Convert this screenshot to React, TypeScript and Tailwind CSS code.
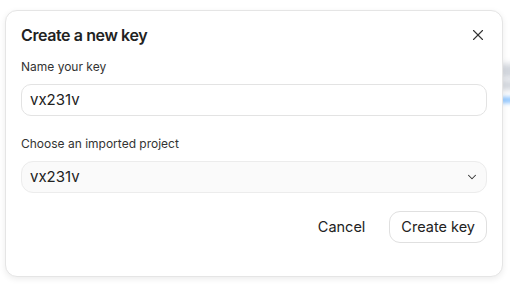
import React from 'react';
import { X, ChevronDown } from 'lucide-react';

const App: React.FC = () => {
  return (
    <div className="relative w-[510px] h-[290px] bg-white overflow-hidden font-['Inter',sans-serif] text-[#1a1a1a]">
      {/* blurred page content peeking behind the dialog */}
      <div className="absolute left-[500px] top-[64px] w-[20px] h-[14px] bg-gray-300 blur-[3px]" />
      <div className="absolute left-[500px] top-[80px] w-[20px] h-[10px] bg-gray-300 blur-[3px]" />
      <div className="absolute left-[500px] top-[97px] w-[20px] h-[6px] bg-blue-300 blur-[2px]" />

      <div className="relative ml-[5px] mt-[10px] w-[498px] h-[267px] bg-white rounded-[12px] border border-[#e5e5e5] shadow-[0_2px_6px_rgba(0,0,0,0.08)] px-[15px] pt-[12px]">
        <div className="flex items-center justify-between h-[24px]">
          <h2 className="text-[16px] font-semibold tracking-[-0.4px] text-[#222]">Create a new key</h2>
          <button className="mr-[0px] text-[#333]">
            <X size={18} strokeWidth={1.5} />
          </button>
        </div>

        <label className="block mt-[11px] text-[12px] text-[#333]">Name your key</label>
        <div className="mt-[8px] h-[32px] w-full rounded-[10px] border border-[#e3e3e3] bg-white flex items-center px-[8px] text-[15px] text-[#222]">
          vx231v
        </div>

        <label className="block mt-[19px] text-[12px] text-[#333]">Choose an imported project</label>
        <div className="mt-[8px] h-[32px] w-full rounded-[12px] border border-[#ececec] bg-[#fafafa] flex items-center justify-between pl-[8px] pr-[7px] text-[15px] text-[#222]">
          <span>vx231v</span>
          <ChevronDown size={14} strokeWidth={1.8} className="text-[#333]" />
        </div>

        <div className="flex justify-end items-center gap-[14px] mt-[18px]">
          <button className="px-[10px] h-[32px] text-[14.5px] text-[#222]">Cancel</button>
          <button className="h-[32px] px-[11px] rounded-[11px] border border-[#e0e0e0] bg-white text-[14.5px] text-[#222]">
            Create key
          </button>
        </div>
      </div>
    </div>
  );
};

export default App;
